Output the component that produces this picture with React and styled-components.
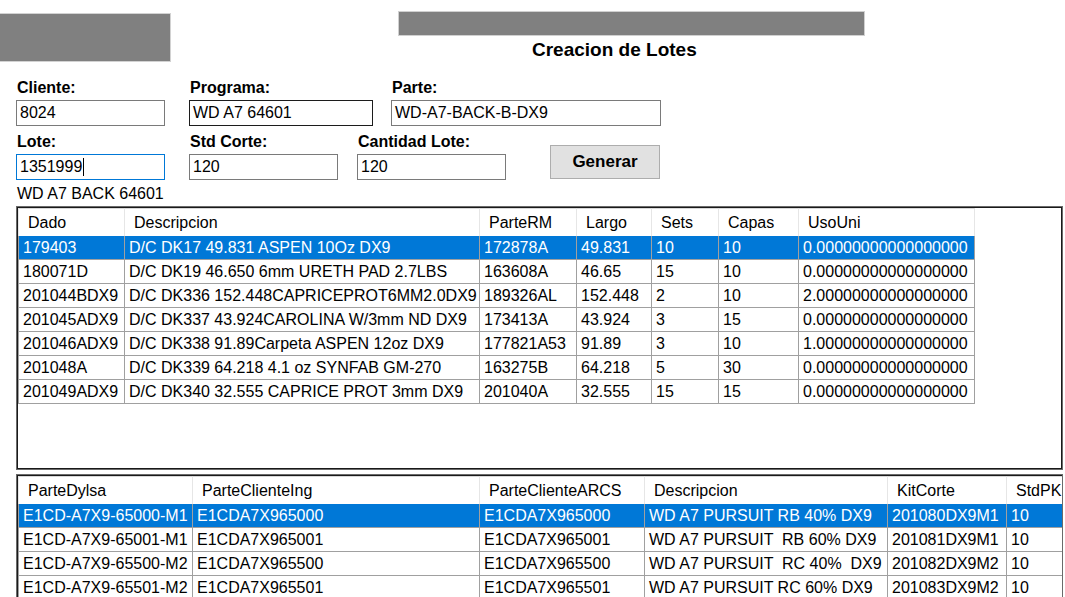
import React from "react"
import styled, { createGlobalStyle } from "styled-components"

const GlobalStyle = createGlobalStyle`
  html, body {
    margin: 0;
    padding: 0;
    background: #ffffff;
    overflow: hidden;
  }
  body {
    font-family: "Liberation Sans", Arial, sans-serif;
    color: #000000;
  }
`

const Page = styled.div`
  width: 1065px;
  height: 597px;
  overflow: hidden;
`

const Header = styled.div`
  display: flex;
  align-items: flex-start;
`

const Logo = styled.div`
  width: 171px;
  height: 49px;
  margin-top: 13px;
  box-sizing: border-box;
  background: #808080;
  border: 1px solid #d2d2d2;
  border-left: none;
`

const TitleCol = styled.div`
  margin-left: 227px;
  margin-top: 11px;
  width: 467px;
`

const Banner = styled.div`
  height: 25px;
  box-sizing: border-box;
  background: #808080;
  border: 1px solid #d0d0d0;
`

const Title = styled.h1`
  margin: 3px 0 0;
  padding-left: 134px;
  font-size: 19px;
  line-height: 22px;
  font-weight: bold;
  white-space: nowrap;
`

const Form = styled.div`
  margin-top: 16px;
  padding-left: 16px;
`

const FieldRow = styled.div`
  display: flex;
  align-items: flex-start;
  margin-top: ${(p) => p.$top || 0}px;
`

const Field = styled.div`
  display: flex;
  flex-direction: column;
  gap: 2px;
  margin-left: ${(p) => p.$ml || 0}px;
`

const Label = styled.label`
  font-size: 16px;
  line-height: 20px;
  font-weight: bold;
  padding-left: 1px;
  white-space: nowrap;
`

const TextBox = styled.div`
  width: ${(p) => p.$w}px;
  height: 26px;
  box-sizing: border-box;
  border: 1px solid ${(p) => (p.$focus ? "#0078d7" : p.$hover ? "#1c1c1c" : "#7a7a7a")};
  padding: 0 3px;
  font-size: 16px;
  line-height: 24px;
  white-space: nowrap;
  overflow: hidden;
  display: flex;
  align-items: center;
`

const Caret = styled.span`
  display: inline-block;
  width: 1px;
  height: 18px;
  background: #000;
  margin-left: 1px;
`

const Button = styled.button`
  width: 110px;
  height: 34px;
  margin-left: 44px;
  margin-top: 13px;
  box-sizing: border-box;
  background: #e1e1e1;
  border: 1px solid #adadad;
  font-family: "Liberation Sans", Arial, sans-serif;
  font-size: 17px;
  font-weight: bold;
  color: #000;
  padding: 0;
`

const Caption = styled.div`
  margin-top: 5px;
  padding-left: 17px;
  font-size: 16px;
  line-height: 18px;
`

const GridBox = styled.div`
  margin: ${(p) => p.$top}px 0 0 16px;
  width: 1047px;
  height: ${(p) => p.$h}px;
  box-sizing: border-box;
  border: 1px solid #6a6a6a;
  box-shadow: inset 0 0 0 1px #1a1a1a;
  padding: 1px;
  overflow: hidden;
  background: #ffffff;
`

const GridRow = styled.div`
  display: flex;
  width: max-content;
  border-left: 1px solid ${(p) => (p.$head ? "#e6e6e6" : "#a0a0a0")};
  background: ${(p) => (p.$sel ? "#0078d7" : "#ffffff")};
  color: ${(p) => (p.$sel ? "#ffffff" : "#000000")};
`

const HeadCell = styled.div`
  width: ${(p) => p.$w}px;
  height: 28px;
  box-sizing: border-box;
  border-top: 1px solid #d9d9d9;
  border-right: 1px solid #e6e6e6;
  padding-left: 9px;
  font-size: 16px;
  line-height: 27px;
  white-space: nowrap;
  overflow: hidden;
`

const Cell = styled.div`
  width: ${(p) => p.$w}px;
  height: 24px;
  box-sizing: border-box;
  border-right: 1px solid #a0a0a0;
  border-bottom: 1px solid #a0a0a0;
  padding-left: 4px;
  font-size: 16px;
  line-height: 23px;
  white-space: pre;
  overflow: hidden;
`

const Grid = ({ columns, rows, top, height }) => (
  <GridBox $top={top} $h={height}>
    <GridRow $head>
      {columns.map((c) => (
        <HeadCell key={c.name} $w={c.w}>
          {c.name}
        </HeadCell>
      ))}
    </GridRow>
    {rows.map((r, i) => (
      <GridRow key={i} $sel={i === 0}>
        {r.map((v, j) => (
          <Cell key={j} $w={columns[j].w}>
            {v}
          </Cell>
        ))}
      </GridRow>
    ))}
  </GridBox>
)

const z = "0.00000000000000000"
const o = "1.00000000000000000"
const t = "2.00000000000000000"

const dadoCols = [
  { name: "Dado", w: 106 },
  { name: "Descripcion", w: 355 },
  { name: "ParteRM", w: 97 },
  { name: "Largo", w: 75 },
  { name: "Sets", w: 67 },
  { name: "Capas", w: 80 },
  { name: "UsoUni", w: 176 },
]

const dadoRows = [
  ["179403", "D/C DK17 49.831 ASPEN 10Oz DX9", "172878A", "49.831", "10", "10", z],
  ["180071D", "D/C DK19 46.650 6mm URETH PAD 2.7LBS", "163608A", "46.65", "15", "10", z],
  ["201044BDX9", "D/C DK336 152.448CAPRICEPROT6MM2.0DX9", "189326AL", "152.448", "2", "10", t],
  ["201045ADX9", "D/C DK337 43.924CAROLINA W/3mm ND DX9", "173413A", "43.924", "3", "15", z],
  ["201046ADX9", "D/C DK338 91.89Carpeta ASPEN 12oz DX9", "177821A53", "91.89", "3", "10", o],
  ["201048A", "D/C DK339 64.218 4.1 oz SYNFAB GM-270", "163275B", "64.218", "5", "30", z],
  ["201049ADX9", "D/C DK340 32.555 CAPRICE PROT 3mm DX9", "201040A", "32.555", "15", "15", z],
]

const parteCols = [
  { name: "ParteDylsa", w: 174 },
  { name: "ParteClienteIng", w: 287 },
  { name: "ParteClienteARCS", w: 165 },
  { name: "Descripcion", w: 243 },
  { name: "KitCorte", w: 119 },
  { name: "StdPK", w: 90 },
]

const parteRows = [
  ["E1CD-A7X9-65000-M1", "E1CDA7X965000", "E1CDA7X965000", "WD A7 PURSUIT RB 40% DX9", "201080DX9M1", "10"],
  ["E1CD-A7X9-65001-M1", "E1CDA7X965001", "E1CDA7X965001", "WD A7 PURSUIT  RB 60% DX9", "201081DX9M1", "10"],
  ["E1CD-A7X9-65500-M2", "E1CDA7X965500", "E1CDA7X965500", "WD A7 PURSUIT  RC 40%  DX9", "201082DX9M2", "10"],
  ["E1CD-A7X9-65501-M2", "E1CDA7X965501", "E1CDA7X965501", "WD A7 PURSUIT RC 60% DX9", "201083DX9M2", "10"],
]

const App = () => {
  return (
    <Page>
      <GlobalStyle />
      <Header>
        <Logo />
        <TitleCol>
          <Banner />
          <Title>Creacion de Lotes</Title>
        </TitleCol>
      </Header>

      <Form>
        <FieldRow>
          <Field>
            <Label>Cliente:</Label>
            <TextBox $w={149}>8024</TextBox>
          </Field>
          <Field $ml={24}>
            <Label>Programa:</Label>
            <TextBox $w={184} $hover>WD A7 64601</TextBox>
          </Field>
          <Field $ml={18}>
            <Label>Parte:</Label>
            <TextBox $w={270}>WD-A7-BACK-B-DX9</TextBox>
          </Field>
        </FieldRow>
        <FieldRow $top={6}>
          <Field>
            <Label>Lote:</Label>
            <TextBox $w={149} $focus>
              1351999
              <Caret />
            </TextBox>
          </Field>
          <Field $ml={24}>
            <Label>Std Corte:</Label>
            <TextBox $w={149}>120</TextBox>
          </Field>
          <Field $ml={19}>
            <Label>Cantidad Lote:</Label>
            <TextBox $w={149}>120</TextBox>
          </Field>
          <Button>Generar</Button>
        </FieldRow>
      </Form>

      <Caption>WD A7 BACK 64601</Caption>

      <Grid columns={dadoCols} rows={dadoRows} top={3} height={264} />
      <Grid columns={parteCols} rows={parteRows} top={4} height={160} />
    </Page>
  )
}

export default App
